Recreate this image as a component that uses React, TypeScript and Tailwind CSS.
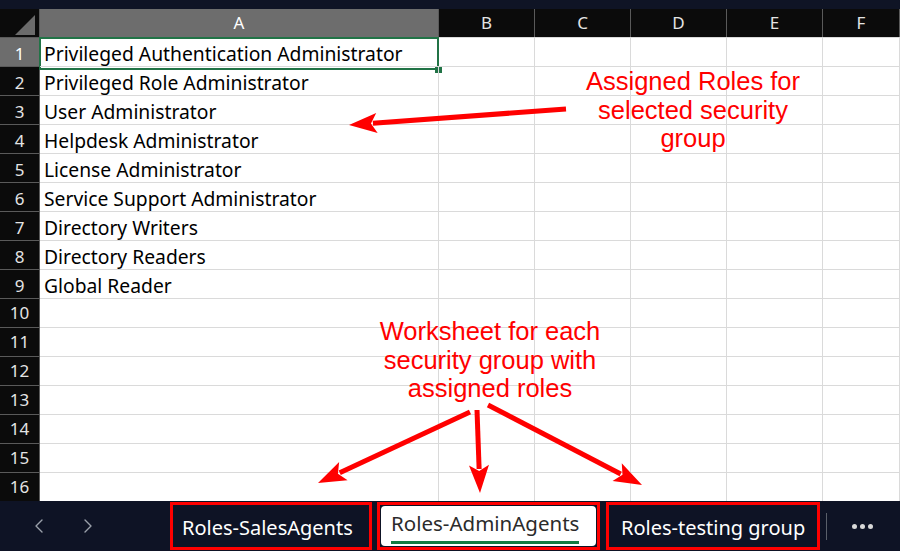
import { ChevronLeft, ChevronRight } from 'lucide-react'

const COLS = ['A', 'B', 'C', 'D', 'E', 'F']

const ROLES = [
  'Privileged Authentication Administrator',
  'Privileged Role Administrator',
  'User Administrator',
  'Helpdesk Administrator',
  'License Administrator',
  'Service Support Administrator',
  'Directory Writers',
  'Directory Readers',
  'Global Reader',
]

const ROWS = Array.from({ length: 16 }, (_, i) => i + 1)

const GRID = 'grid grid-cols-[40px_399px_96px_96px_96px_96px_1fr]'

function Arrow({ x1, y1, x2, y2 }: { x1: number; y1: number; x2: number; y2: number }) {
  // line + filled head, head length 28px
  const dx = x2 - x1
  const dy = y2 - y1
  const len = Math.hypot(dx, dy)
  const ux = dx / len
  const uy = dy / len
  const hl = 28
  const hw = 10
  const bx = x2 - ux * hl
  const by = y2 - uy * hl
  const pts = `${x2},${y2} ${bx - uy * hw},${by + ux * hw} ${bx + ux * 6},${by + uy * 6} ${bx + uy * hw},${by - ux * hw}`
  return (
    <g>
      <line x1={x1} y1={y1} x2={bx + ux * 4} y2={by + uy * 4} stroke="#ff0000" strokeWidth={5} />
      <polygon points={pts} fill="#ff0000" />
    </g>
  )
}

export default function App() {
  return (
    <div className="relative w-[900px] h-[551px] overflow-hidden bg-white font-['Noto_Sans',sans-serif]">
      <div className="h-[9px] bg-[#0f1425]" />

      {/* column headers */}
      <div className={`${GRID} h-[28px] bg-[#0b0b0b]`}>
        <div className="relative border-r border-[#5a5a5a]">
          <div className="absolute right-[4px] bottom-[2px] w-0 h-0 border-l-[20px] border-l-transparent border-b-[20px] border-b-[#6b6b6b]" />
        </div>
        {COLS.map((c) => (
          <div
            key={c}
            className={[
              'flex items-center justify-center text-[17px] border-r border-[#5a5a5a]',
              c === 'A' ? 'bg-[#6d6d6d] text-white' : 'text-[#e4e4e4]',
            ].join(' ')}
          >
            {c}
          </div>
        ))}
      </div>

      {/* rows */}
      {ROWS.map((r) => (
        <div key={r} className={`${GRID} h-[29px]`}>
          <div
            className={[
              'flex items-center justify-center text-[17px] border-t border-[#5a5a5a] border-r',
              r === 1 ? 'bg-[#6d6d6d] text-white' : 'bg-[#0b0b0b] text-[#e4e4e4]',
            ].join(' ')}
          >
            {r}
          </div>
          {COLS.map((c) => (
            <div key={c} className="relative border-t border-r border-[#dadada] flex items-center">
              {c === 'A' && ROLES[r - 1] && (
                <span className="pl-[4px] pt-[2px] text-[19.3px] text-black whitespace-nowrap">{ROLES[r - 1]}</span>
              )}
              {c === 'A' && r === 1 && (
                <>
                  <div className="absolute -left-px -top-px -right-px -bottom-px border-2 border-[#217346]" />
                  <div className="absolute -right-[4px] -bottom-[4px] w-[7px] h-[7px] bg-[#217346]" />
                </>
              )}
            </div>
          ))}
        </div>
      ))}

      {/* sheet tab bar */}
      <div className="flex items-center h-[50px] bg-[#0e1325] text-white">
        <div className="flex items-center w-[170px] pl-[27px] gap-[25px] text-[#9aa0aa]">
          <ChevronLeft size={24} strokeWidth={1.4} />
          <ChevronRight size={24} strokeWidth={1.4} />
        </div>
        <div className="h-[48px] w-[202px] border-[3px] border-[#ff0000] flex items-center pl-[9px] pt-[4px] text-[20px]">
          Roles-SalesAgents
        </div>
        <div className="ml-[5px] h-[48px] w-[223px] border-[3px] border-[#ff0000] p-[1px]">
          <div className="h-full bg-white rounded-[4px] flex flex-col items-start pl-[10px] pt-[5px]">
            <span className="text-[20.5px] leading-[25px] text-[#2b2b2b]">Roles-AdminAgents</span>
            <div className="mt-[5px] h-[3px] w-[188px] bg-[#107c41]" />
          </div>
        </div>
        <div className="ml-[6px] h-[48px] w-[214px] border-[3px] border-[#ff0000] flex items-center pl-[12px] pt-[4px] text-[20px]">
          Roles-testing group
        </div>
        <div className="ml-[6px] h-[27px] w-px bg-[#5a5f6a]" />
        <div className="flex-1 flex justify-center gap-[3px] pr-[2px]">
          <span className="w-[5px] h-[5px] rounded-full bg-[#d8d8d8]" />
          <span className="w-[5px] h-[5px] rounded-full bg-[#d8d8d8]" />
          <span className="w-[5px] h-[5px] rounded-full bg-[#d8d8d8]" />
        </div>
      </div>

      {/* annotations */}
      <div className="absolute left-[563px] top-[67px] w-[260px] text-center text-[#ff0000] text-[25.5px] leading-[28.5px] font-['Liberation_Sans',Arial,sans-serif]">
        Assigned Roles for
        <br />
        selected security
        <br />
        group
      </div>
      <div className="absolute left-[360px] top-[317px] w-[260px] text-center text-[#ff0000] text-[25.5px] leading-[28.5px] font-['Liberation_Sans',Arial,sans-serif]">
        Worksheet for each
        <br />
        security group with
        <br />
        assigned roles
      </div>
      <svg className="absolute inset-0 pointer-events-none" width={900} height={551}>
        <Arrow x1={566} y1={109} x2={349} y2={125} />
        <Arrow x1={470} y1={412} x2={318} y2={483} />
        <Arrow x1={477} y1={410} x2={480} y2={493} />
        <Arrow x1={488} y1={405} x2={642} y2={485} />
      </svg>
    </div>
  )
}
